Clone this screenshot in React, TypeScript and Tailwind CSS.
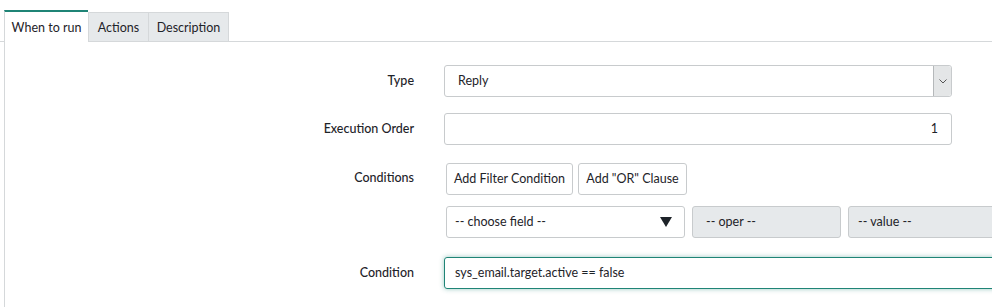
import React from "react";

const font = { fontFamily: "Lato, 'Noto Sans', sans-serif" };

export default function App() {
  return (
    <div className="w-[992px] h-[307px] overflow-hidden bg-white text-[12.5px] text-[#1e2329]" style={font}>
      <div className="pt-[10px] flex items-end">
        <div className="w-[4px] border-b border-[#d5d8da] h-[32px] shrink-0" />
        <div className="w-[84px] h-[32px] border-t-2 border-t-[#1f8476] border-l border-l-[#d5d8da] bg-white flex items-center justify-center pt-[2px] shrink-0">
          When to run
        </div>
        <div className="w-[60px] h-[30px] bg-[#e6e9eb] border-t border-l border-b border-[#d5d8da] flex items-center justify-center pt-[2px] shrink-0">
          Actions
        </div>
        <div className="w-[81px] h-[30px] bg-[#e6e9eb] border border-[#d5d8da] flex items-center justify-center pt-[2px] shrink-0">
          Description
        </div>
        <div className="flex-1 border-b border-[#d5d8da] h-[32px]" />
      </div>
      <div className="ml-[4px] border-l border-[#d5d8da] pt-[23px] h-[266px]">
        <div className="flex items-center">
          <div className="w-[409px] shrink-0 text-right font-medium">Type</div>
          <div className="ml-[30px] w-[508px] shrink-0 h-[32px] border border-[#c8cbcd] rounded-[3px] flex items-center">
            <span className="pl-[13px] flex-1">Reply</span>
            <div className="w-[18px] h-full bg-[#e4e6e7] border-l border-[#b5b8ba] flex items-center justify-center rounded-r-[3px]">
              <svg width="8" height="5" viewBox="0 0 8 5"><path d="M0.5 0.5 L4 4 L7.5 0.5" fill="none" stroke="#555" strokeWidth="1" /></svg>
            </div>
          </div>
        </div>
        <div className="flex items-center mt-[16px]">
          <div className="w-[409px] shrink-0 text-right font-medium">Execution Order</div>
          <div className="ml-[30px] w-[508px] shrink-0 h-[32px] border border-[#c8cbcd] rounded-[3px] flex items-center justify-end pr-[13px]">
            1
          </div>
        </div>
        <div className="flex mt-[18px]">
          <div className="w-[409px] shrink-0 text-right font-medium pt-[6px]">Conditions</div>
          <div className="ml-[32px] flex flex-col shrink-0">
            <div className="flex gap-[5px]">
              <button className="h-[32px] w-[127px] shrink-0 border border-[#c8cbcd] rounded-[3px] bg-white">Add Filter Condition</button>
              <button className="h-[32px] w-[109px] shrink-0 border border-[#c8cbcd] rounded-[3px] bg-white">Add "OR" Clause</button>
            </div>
            <div className="flex mt-[11px] gap-[7px]">
              <div className="w-[239px] shrink-0 h-[32px] border border-[#c8cbcd] rounded-[3px] flex items-center pl-[8px] pr-[12px]">
                <span className="flex-1">-- choose field --</span>
                <svg width="12" height="10" viewBox="0 0 12 10"><path d="M0 0 H12 L6 10 Z" fill="#1e2329" /></svg>
              </div>
              <div className="w-[149px] shrink-0 h-[32px] border border-[#c8cbcd] rounded-[3px] bg-[#e6e9eb] flex items-center pl-[13px]">-- oper --</div>
              <div className="w-[160px] shrink-0 h-[32px] border border-[#c8cbcd] rounded-[3px] bg-[#e6e9eb] flex items-center pl-[9px]">-- value --</div>
            </div>
          </div>
        </div>
        <div className="flex items-center mt-[19px]">
          <div className="w-[409px] shrink-0 text-right font-medium">Condition</div>
          <div className="ml-[30px] w-[600px] h-[32px] border border-[#1f8476] rounded-[3px] flex items-center pl-[10px] shadow-[0_0_5px_rgba(31,132,118,0.45)] shrink-0">
            sys_email.target.active == false
          </div>
        </div>
      </div>
    </div>
  );
}
